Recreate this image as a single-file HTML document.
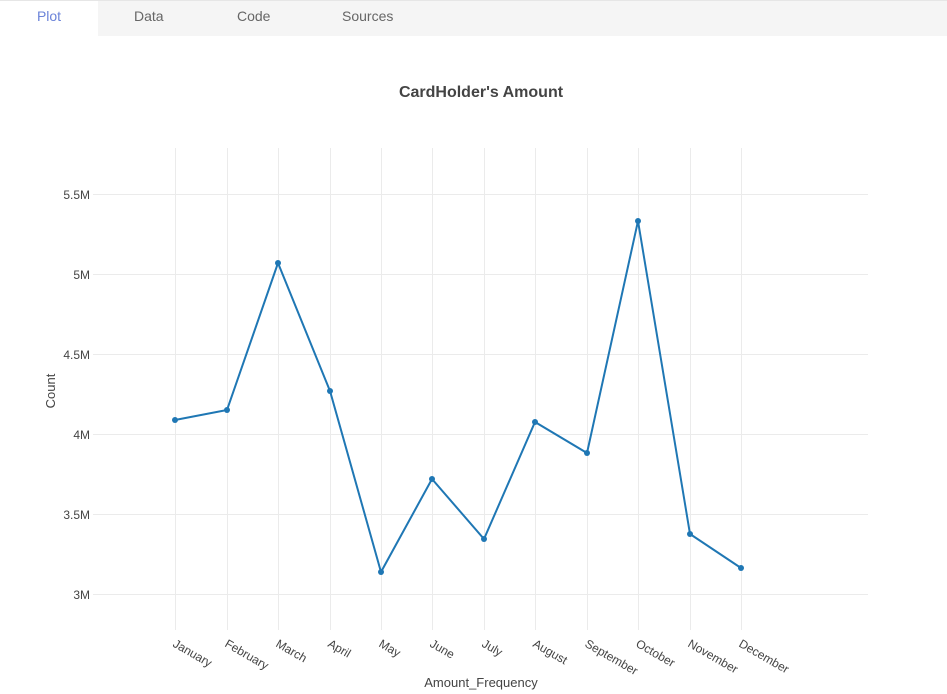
<!DOCTYPE html>
<html><head><meta charset="utf-8"><style>
body{margin:0;width:947px;height:694px;background:#fff;font-family:"Liberation Sans",sans-serif;overflow:hidden;position:relative}
.tabs{position:absolute;left:0;top:0;width:947px;height:36px;background:#f5f5f5;border-top:1px solid #e6e6e6;box-sizing:border-box}
.tab{position:absolute;top:0;height:36px;line-height:30px;font-size:14px;color:#666}
</style></head><body>
<div class="tabs">
<div class="tab" style="left:0;width:98px;background:#fff;color:#6b83d9;text-align:center">Plot</div>
<div class="tab" style="left:134px">Data</div>
<div class="tab" style="left:237px">Code</div>
<div class="tab" style="left:342px">Sources</div>
</div>
<svg width="947" height="694" style="position:absolute;left:0;top:0" font-family="Liberation Sans, sans-serif">
<g stroke="#ebebeb" stroke-width="1">
<line x1="93" x2="868" y1="194.5" y2="194.5"/><line x1="93" x2="868" y1="274.5" y2="274.5"/><line x1="93" x2="868" y1="354.5" y2="354.5"/><line x1="93" x2="868" y1="434.5" y2="434.5"/><line x1="93" x2="868" y1="514.5" y2="514.5"/><line x1="93" x2="868" y1="594.5" y2="594.5"/>
<line x1="175.5" x2="175.5" y1="148" y2="630"/><line x1="227.5" x2="227.5" y1="148" y2="630"/><line x1="278.5" x2="278.5" y1="148" y2="630"/><line x1="330.5" x2="330.5" y1="148" y2="630"/><line x1="381.5" x2="381.5" y1="148" y2="630"/><line x1="432.5" x2="432.5" y1="148" y2="630"/><line x1="484.5" x2="484.5" y1="148" y2="630"/><line x1="535.5" x2="535.5" y1="148" y2="630"/><line x1="587.5" x2="587.5" y1="148" y2="630"/><line x1="638.5" x2="638.5" y1="148" y2="630"/><line x1="690.5" x2="690.5" y1="148" y2="630"/><line x1="741.5" x2="741.5" y1="148" y2="630"/>
</g>
<g font-size="12" fill="#444" text-anchor="end">
<text x="90" y="199">5.5M</text><text x="90" y="279">5M</text><text x="90" y="359">4.5M</text><text x="90" y="439">4M</text><text x="90" y="519">3.5M</text><text x="90" y="599">3M</text>
</g>
<text x="481" y="97" font-size="16" font-weight="bold" fill="#444" text-anchor="middle">CardHolder's Amount</text>
<text transform="translate(55,391) rotate(-90)" font-size="13" fill="#444" text-anchor="middle">Count</text>
<text x="481" y="687" font-size="13" fill="#444" text-anchor="middle">Amount_Frequency</text>
<g font-size="12" fill="#444">
<text transform="translate(172,646) rotate(30)">January</text>
<text transform="translate(224,646) rotate(30)">February</text>
<text transform="translate(275,646) rotate(30)">March</text>
<text transform="translate(327,646) rotate(30)">April</text>
<text transform="translate(378,646) rotate(30)">May</text>
<text transform="translate(429,646) rotate(30)">June</text>
<text transform="translate(481,646) rotate(30)">July</text>
<text transform="translate(532,646) rotate(30)">August</text>
<text transform="translate(584,646) rotate(30)">September</text>
<text transform="translate(635,646) rotate(30)">October</text>
<text transform="translate(687,646) rotate(30)">November</text>
<text transform="translate(738,646) rotate(30)">December</text>
</g>
<polyline fill="none" stroke="#1f77b4" stroke-width="2" points="175,420 227,410 278,263 330,391 381,572 432,479 484,539 535,422 587,453 638,221 690,534 741,568"/>
<g fill="#1f77b4">
<circle cx="175" cy="420" r="3"/><circle cx="227" cy="410" r="3"/><circle cx="278" cy="263" r="3"/><circle cx="330" cy="391" r="3"/><circle cx="381" cy="572" r="3"/><circle cx="432" cy="479" r="3"/><circle cx="484" cy="539" r="3"/><circle cx="535" cy="422" r="3"/><circle cx="587" cy="453" r="3"/><circle cx="638" cy="221" r="3"/><circle cx="690" cy="534" r="3"/><circle cx="741" cy="568" r="3"/>
</g>
</svg>
</body></html>
